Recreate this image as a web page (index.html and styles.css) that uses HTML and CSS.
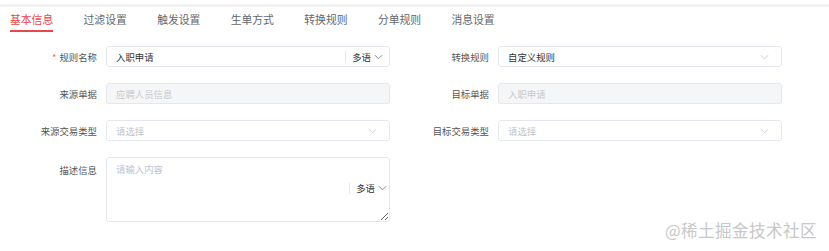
FILE: index.html
```html
<!DOCTYPE html>
<html lang="zh-CN">
<head>
    <meta charset="UTF-8">
    <title>规则设置</title>
    <link rel="stylesheet" href="styles.css">
</head>
<body>
<div class="topline"></div>

<!-- Tabs -->
<div class="tabs">
    <div class="tab active">基本信息</div>
    <div class="tab">过滤设置</div>
    <div class="tab">触发设置</div>
    <div class="tab">生单方式</div>
    <div class="tab">转换规则</div>
    <div class="tab">分单规则</div>
    <div class="tab">消息设置</div>
</div>

<!-- Form -->
<div class="form">
    <div class="form-item">
        <label class="label"><span class="req">*</span>规则名称</label>
        <div class="field">
            <span class="value">入职申请</span>
            <span class="lang"><span class="sep"></span>多语
                <svg class="chev dark" viewBox="0 0 10 6"><polyline points="1,1 5,5 9,1"/></svg>
            </span>
        </div>
    </div>
    <div class="form-item">
        <label class="label">转换规则</label>
        <div class="field">
            <span class="value">自定义规则</span>
            <svg class="chev" viewBox="0 0 10 6"><polyline points="1,1 5,5 9,1"/></svg>
        </div>
    </div>

    <div class="form-item">
        <label class="label">来源单据</label>
        <div class="field disabled"><span class="placeholder">应聘人员信息</span></div>
    </div>
    <div class="form-item">
        <label class="label">目标单据</label>
        <div class="field disabled"><span class="placeholder">入职申请</span></div>
    </div>

    <div class="form-item">
        <label class="label">来源交易类型</label>
        <div class="field">
            <span class="placeholder">请选择</span>
            <svg class="chev" viewBox="0 0 10 6"><polyline points="1,1 5,5 9,1"/></svg>
        </div>
    </div>
    <div class="form-item">
        <label class="label">目标交易类型</label>
        <div class="field">
            <span class="placeholder">请选择</span>
            <svg class="chev" viewBox="0 0 10 6"><polyline points="1,1 5,5 9,1"/></svg>
        </div>
    </div>

    <div class="form-item top">
        <label class="label">描述信息</label>
        <div class="area-wrap">
            <textarea class="area" placeholder="请输入内容"></textarea>
            <span class="lang area-lang"><span class="sep"></span>多语
                <svg class="chev dark" viewBox="0 0 10 6"><polyline points="1,1 5,5 9,1"/></svg>
            </span>
        </div>
    </div>
</div>

<div class="watermark">@稀土掘金技术社区</div>
</body>
</html>
```

FILE: styles.css
```css
body {
    margin: 0;
    background: #fff;
    font-family: "Noto Sans CJK SC", "Noto Sans", sans-serif;
    color: #333;
}

.topline {
    margin-top: 4px;
    height: 3px;
    background: #f2f2f3;
}

/* Tabs */
.tabs {
    display: flex;
    gap: 30.4px;
    padding-left: 10px;
}

.tab {
    font-size: 10.8px;
    color: #63666b;
    line-height: 14px;
    padding-top: 5px;
    padding-bottom: 4px;
    border-bottom: 2px solid transparent;
}

.tab.active {
    color: #e5474c;
    border-bottom-color: #e5474c;
}

/* Form */
.form {
    display: grid;
    grid-template-columns: 392px 392px;
    row-gap: 16px;
    margin-top: 14px;
}

.form-item {
    display: flex;
    align-items: center;
}

.form-item.top {
    align-items: flex-start;
}

.label {
    width: 97px;
    margin-right: 9px;
    text-align: right;
    font-size: 9.4px;
    color: #555;
    white-space: nowrap;
}

.form-item.top .label {
    padding-top: 6px;
}

.req {
    color: #f56c6c;
    margin-right: 3px;
}

.field {
    width: 284px;
    height: 21px;
    box-sizing: border-box;
    border: 1px solid #e4e7ed;
    border-radius: 3px;
    display: flex;
    align-items: center;
    padding: 0 9px;
    font-size: 9.4px;
}

.field.disabled {
    background: #f5f6f8;
}

.value {
    flex: 1;
    color: #333;
}

.placeholder {
    flex: 1;
    color: #c0c4cc;
}

.field.disabled .placeholder {
    color: #c6c8cc;
}

.chev {
    width: 9px;
    height: 6px;
    fill: none;
    stroke: #c6c9cf;
    stroke-width: 1;
    margin-right: 3px;
}

.chev.dark {
    stroke: #777;
    margin-left: 3px;
    margin-right: 0;
}

.lang {
    display: flex;
    align-items: center;
    color: #333;
    font-size: 9.4px;
    margin-right: -3px;
}

.sep {
    width: 1px;
    height: 11px;
    background: #e4e7ed;
    margin-right: 6px;
}

.area-wrap {
    position: relative;
    width: 284px;
}

.area {
    display: block;
    width: 284px;
    height: 65px;
    box-sizing: border-box;
    border: 1px solid #e4e7ed;
    border-radius: 3px;
    padding: 4px 9px;
    font-family: "Noto Sans CJK SC", "Noto Sans", sans-serif;
    font-size: 9.4px;
    resize: vertical;
    outline: none;
}

.area::placeholder {
    color: #c0c4cc;
}

.area-lang {
    position: absolute;
    right: 6px;
    top: 24px;
}

.watermark {
    position: absolute;
    right: 12px;
    top: 218px;
    font-size: 16.6px;
    color: #c8c8c8;
    text-shadow: 0 0 1px #fff;
    letter-spacing: 0.4px;
}
```
